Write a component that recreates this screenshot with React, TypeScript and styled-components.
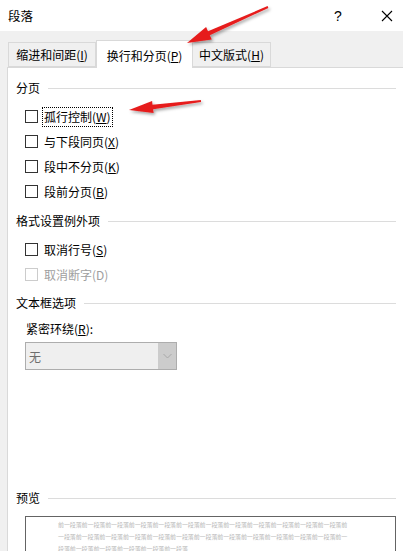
import React from 'react';
import styled, { createGlobalStyle } from 'styled-components';

const GlobalStyle = createGlobalStyle`
  html, body {
    margin: 0;
    padding: 0;
    background: #ffffff;
    overflow: hidden;
  }
  body {
    font-family: "Noto Sans CJK SC", "Liberation Sans", sans-serif;
    color: #000;
  }
`;

const Dialog = styled.div`
  position: relative;
  width: 403px;
  height: 551px;
  display: flex;
  flex-direction: column;
  overflow: hidden;
  font-size: 12px;
`;

const TitleBar = styled.div`
  height: 31px;
  flex: none;
  display: flex;
  align-items: center;
  padding-left: 8px;
  background: #fff;
`;

const Title = styled.div`
  flex: 1;
  font-size: 12.5px;
  line-height: 16px;
`;

const HelpButton = styled.div`
  width: 16px;
  margin-right: 34px;
  font-family: "Liberation Sans", sans-serif;
  font-size: 14px;
  text-align: center;
`;

const CloseButton = styled.div`
  width: 14px;
  height: 14px;
  margin-right: 9px;
  display: flex;
  align-items: center;
  justify-content: center;
`;

const Body = styled.div`
  flex: 1;
  display: flex;
  flex-direction: column;
  background: #f0f0f0;
  padding-left: 7px;
`;

const TabStrip = styled.div`
  height: 36px;
  flex: none;
  display: flex;
  align-items: flex-end;
  padding-left: 1px;
  position: relative;
  z-index: 1;
`;

const Tab = styled.div<{ $active?: boolean; $w: number }>`
  width: ${p => p.$w}px;
  height: ${p => (p.$active ? 28 : 25)}px;
  margin-bottom: ${p => (p.$active ? -1 : 0)}px;
  box-sizing: border-box;
  border: 1px solid #d9d9d9;
  border-bottom: ${p => (p.$active ? 'none' : '1px solid #d9d9d9')};
  margin-left: ${p => (p.$active ? 0 : -1)}px;
  background: ${p => (p.$active ? '#fff' : '#f0f0f0')};
  display: flex;
  align-items: center;
  justify-content: center;
  padding-top: ${p => (p.$active ? 2 : 0)}px;
  line-height: 16px;
  &:first-child {
    margin-left: 0;
  }
`;

const Key = styled.u`
  text-decoration: underline;
  text-underline-offset: 1px;
`;

const Panel = styled.div`
  flex: 1;
  background: #fff;
  border-left: 1px solid #d9d9d9;
  border-top: 1px solid #d9d9d9;
  padding: 0 7px 0 8px;
  display: flex;
  flex-direction: column;
`;

const Heading = styled.div<{ $top: number }>`
  display: flex;
  align-items: center;
  height: 16px;
  line-height: 16px;
  margin-top: ${p => p.$top}px;
  white-space: nowrap;
  &::after {
    content: '';
    flex: 1;
    height: 1px;
    margin-left: 8px;
    background: #dcdcdc;
  }
`;

const Group = styled.div<{ $top: number }>`
  margin-top: ${p => p.$top}px;
  display: flex;
  flex-direction: column;
`;

const CheckRow = styled.div<{ $disabled?: boolean }>`
  height: 25px;
  display: flex;
  align-items: center;
  padding-left: 9px;
  color: ${p => (p.$disabled ? '#a0a0a0' : '#000')};
`;

const Box = styled.span<{ $disabled?: boolean }>`
  width: 13px;
  height: 13px;
  box-sizing: border-box;
  border: 1px solid ${p => (p.$disabled ? '#cccccc' : '#333333')};
  background: #fff;
  margin-right: 4px;
  flex: none;
`;

const Label = styled.span<{ $focus?: boolean }>`
  line-height: 16px;
  padding: 1px 1px;
  border: 1px dotted ${p => (p.$focus ? '#000' : 'transparent')};
`;

const FieldLabel = styled.div`
  margin-top: 10px;
  padding-left: 10px;
  line-height: 16px;
`;

const Select = styled.div`
  margin: 5px 0 0 9px;
  width: 152px;
  height: 28px;
  box-sizing: border-box;
  border: 1px solid #adadad;
  background: #efefef;
  display: flex;
  align-items: stretch;
`;

const SelectValue = styled.div`
  flex: 1;
  display: flex;
  align-items: center;
  padding-left: 3px;
  color: #6d6d6d;
`;

const SelectArrow = styled.div`
  width: 18px;
  background: #cccccc;
  display: flex;
  align-items: center;
  justify-content: center;
`;

const PreviewBox = styled.div`
  margin: 10px 0 0 9px;
  flex: 1;
  border: 1px solid #646464;
  border-bottom: none;
  padding: 2px 0 0 32px;
  background: #fff;
`;

const PreviewLine = styled.div`
  font-size: 6px;
  line-height: 12px;
  letter-spacing: -0.1px;
  color: #b9b9b9;
  white-space: nowrap;
`;

const Overlay = styled.svg`
  position: absolute;
  left: 0;
  top: 0;
  pointer-events: none;
  z-index: 5;
`;

const arrow = (tx: number, ty: number, hx: number, hy: number, len: number, half: number) => {
  const dx = hx - tx;
  const dy = hy - ty;
  const d = Math.hypot(dx, dy);
  const ux = dx / d;
  const uy = dy / d;
  const nx = -uy;
  const ny = ux;
  const bx = hx - ux * len;
  const by = hy - uy * len;
  const pts = [
    [tx + nx * 1, ty + ny * 1],
    [bx + nx * 2.2, by + ny * 2.2],
    [bx + nx * half, by + ny * half],
    [hx, hy],
    [bx - nx * half, by - ny * half],
    [bx - nx * 2.2, by - ny * 2.2],
    [tx - nx * 1, ty - ny * 1],
  ];
  return pts.map(p => p.map(v => v.toFixed(1)).join(',')).join(' ');
};

const preview = [
  '前一段落'.repeat(12) + '前',
  '一段落前'.repeat(12) + '一',
  '段落前一'.repeat(5) + '段落',
];

const App = () => {
  return (
    <>
      <GlobalStyle />
      <Dialog>
        <TitleBar>
          <Title>段落</Title>
          <HelpButton>?</HelpButton>
          <CloseButton>
            <svg width="12" height="12" viewBox="0 0 12 12">
              <path d="M1 1L11 11M11 1L1 11" stroke="#000" strokeWidth="1.1" fill="none" />
            </svg>
          </CloseButton>
        </TitleBar>
        <Body>
          <TabStrip>
            <Tab $w={88}>缩进和间距(<Key>I</Key>)</Tab>
            <Tab $w={97} $active>换行和分页(<Key>P</Key>)</Tab>
            <Tab $w={79}>中文版式(<Key>H</Key>)</Tab>
          </TabStrip>
          <Panel>
            <Heading $top={12}>分页</Heading>
            <Group $top={8}>
              <CheckRow><Box /><Label $focus>孤行控制(<Key>W</Key>)</Label></CheckRow>
              <CheckRow><Box /><Label>与下段同页(<Key>X</Key>)</Label></CheckRow>
              <CheckRow><Box /><Label>段中不分页(<Key>K</Key>)</Label></CheckRow>
              <CheckRow><Box /><Label>段前分页(<Key>B</Key>)</Label></CheckRow>
            </Group>
            <Heading $top={9}>格式设置例外项</Heading>
            <Group $top={8}>
              <CheckRow><Box /><Label>取消行号(<Key>S</Key>)</Label></CheckRow>
              <CheckRow $disabled><Box $disabled /><Label>取消断字(D)</Label></CheckRow>
            </Group>
            <Heading $top={8}>文本框选项</Heading>
            <FieldLabel>紧密环绕(<Key>R</Key>):</FieldLabel>
            <Select>
              <SelectValue>无</SelectValue>
              <SelectArrow>
                <svg width="9" height="6" viewBox="0 0 9 6">
                  <path d="M0.5 1L4.5 5L8.5 1" stroke="#a8a8a8" strokeWidth="1" fill="none" />
                </svg>
              </SelectArrow>
            </Select>
            <Heading $top={120}>预览</Heading>
            <PreviewBox>
              {preview.map((line, i) => (
                <PreviewLine key={i}>{line}</PreviewLine>
              ))}
            </PreviewBox>
          </Panel>
        </Body>
        <Overlay width="403" height="551" viewBox="0 0 403 551">
          <defs>
            <filter id="shadow" x="-20%" y="-50%" width="140%" height="200%">
              <feDropShadow dx="1.5" dy="2" stdDeviation="1.5" floodColor="#000" floodOpacity="0.35" />
            </filter>
          </defs>
          <polygon points={arrow(268, 7, 187, 43, 24, 7)} fill="#e61c1c" filter="url(#shadow)" />
          <polygon points={arrow(201, 101, 129, 110, 24, 6)} fill="#e61c1c" filter="url(#shadow)" />
        </Overlay>
      </Dialog>
    </>
  );
};

export default App;
